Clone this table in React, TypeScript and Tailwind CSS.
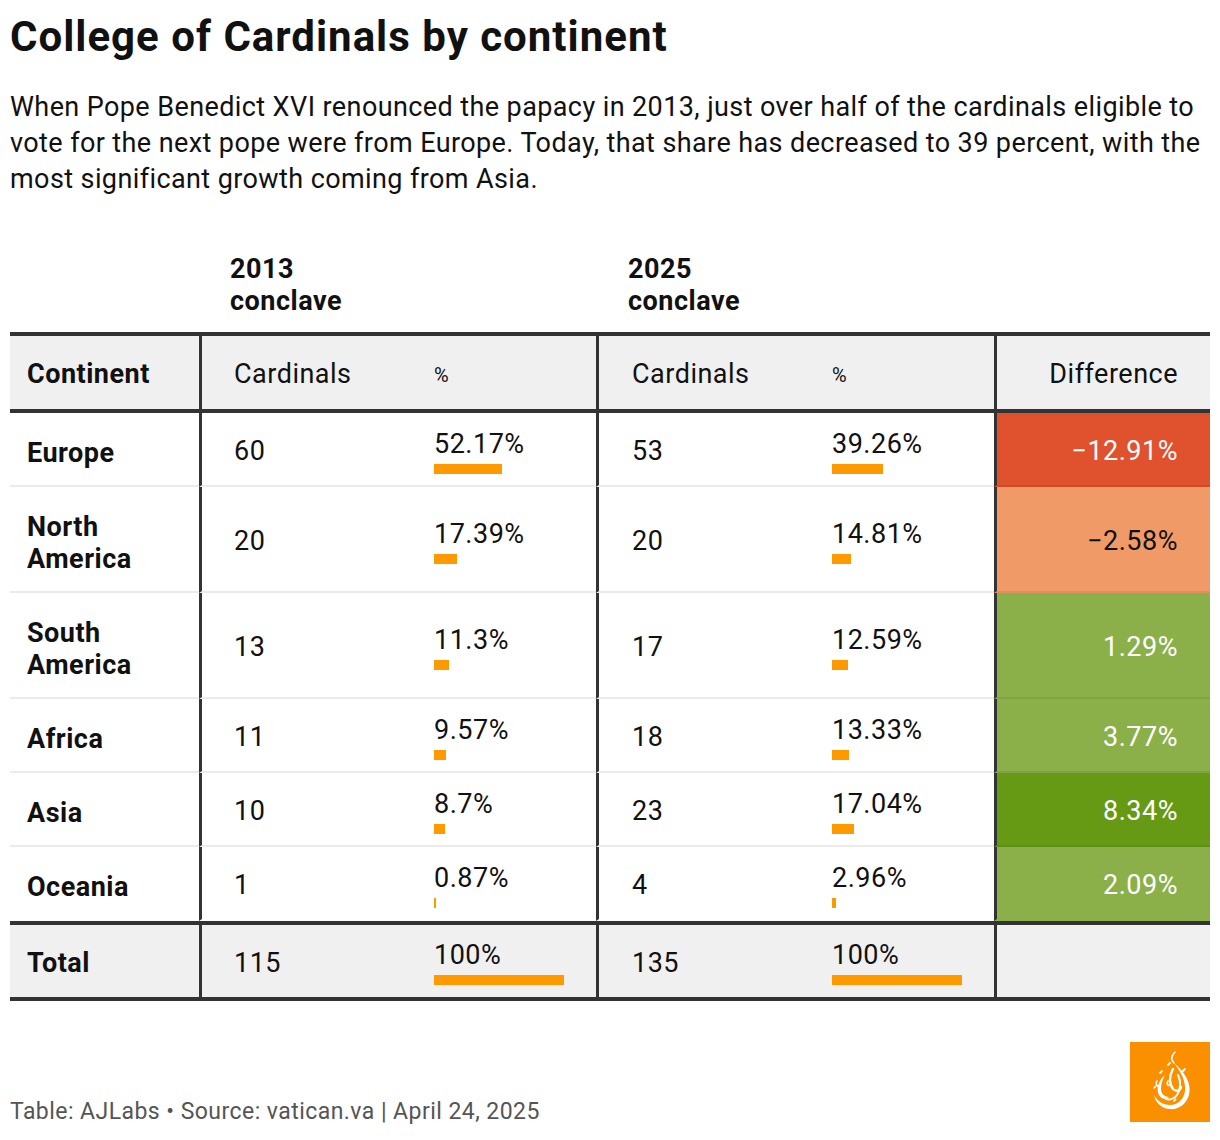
const rows = [
  { name: ["Europe"], c13: 60, p13: 52.17, c25: 53, p25: 39.26, diff: "−12.91%", bg: "bg-[#e0512e]", fg: "text-white" },
  { name: ["North", "America"], c13: 20, p13: 17.39, c25: 20, p25: 14.81, diff: "−2.58%", bg: "bg-[#f09a68]", fg: "text-[#111]" },
  { name: ["South", "America"], c13: 13, p13: 11.3, c25: 17, p25: 12.59, diff: "1.29%", bg: "bg-[#8bb04a]", fg: "text-white" },
  { name: ["Africa"], c13: 11, p13: 9.57, c25: 18, p25: 13.33, diff: "3.77%", bg: "bg-[#8bb04a]", fg: "text-white" },
  { name: ["Asia"], c13: 10, p13: 8.7, c25: 23, p25: 17.04, diff: "8.34%", bg: "bg-[#669a14]", fg: "text-white" },
  { name: ["Oceania"], c13: 1, p13: 0.87, c25: 4, p25: 2.96, diff: "2.09%", bg: "bg-[#8bb04a]", fg: "text-white" },
];

const Pct = ({ value }: { value: number }) => (
  <div className="flex flex-col">
    <span className="leading-[28px]">{value}%</span>
    <div
      className="mt-[6px] h-[10px] bg-[#ff9900]"
      style={{ width: Math.max(2, Math.round((value / 100) * 130)) }}
    />
  </div>
);

// Al Jazeera calligraphy mark, roughly traced
const Logo = () => (
  <div className="w-[80px] h-[80px] bg-[#fa9000] flex items-center justify-center">
    <svg width="44" height="62" viewBox="0 0 44 62" fill="none" stroke="white" strokeLinecap="round" strokeLinejoin="round">
      <path d="M27 1 C23 5 23 9 26 12" strokeWidth="1.4" />
      <path
        d="M26 12 C36 20 44 32 41 44 C38 54 30 59 21 58 C13 57 7 51 6 44 C9 50 15 54 22 54 C30 54 36 48 37 40 C38 30 33 21 26 12 Z"
        fill="white"
        stroke="none"
      />
      <path
        d="M17 24 C10 30 8 38 11 44 C13 48 18 49 21 46 C17 46 13 43 13 38 C13 32 15 28 17 24 Z"
        fill="white"
        stroke="none"
      />
      <path d="M25 18 C21 25 21 33 25 38 C28 41 32 40 33 36" strokeWidth="2.4" />
      <path d="M30 24 C33 30 33 38 29 44 C26 48 22 49 18 48" strokeWidth="2" />
      <path d="M9 30 C7 33 9 36 12 35" strokeWidth="1.6" />
      <path d="M20 30 C18 33 20 35 22 34" strokeWidth="1.6" />
      <path d="M20 14 l2 -2" strokeWidth="1.8" />
      <path d="M12 22 l2 -2" strokeWidth="1.8" />
      <path d="M35 20 l2 -2" strokeWidth="1.8" />
      <path d="M6 37 l1.6 -1.6" strokeWidth="1.6" />
      <path d="M36 50 l1.6 -1.6" strokeWidth="1.6" />
      <path d="M26 50 l1.6 -1.6" strokeWidth="1.6" />
    </svg>
  </div>
);

const App = () => {
  return (
    <div className="w-[1220px] h-[1140px] bg-white text-[#111] font-['Roboto',sans-serif] px-[10px] flex flex-col">
      {/* TITLE */}
      <h1 className="mt-[12px] text-[42px] font-bold leading-[50px] tracking-[1px]">
        College of Cardinals by continent
      </h1>
      <p className="mt-[27px] text-[27px] leading-[36px] tracking-[0.4px]">
        When Pope Benedict XVI renounced the papacy in 2013, just over half of the cardinals eligible to vote
        for the next pope were from Europe. Today, that share has decreased to 39 percent, with the most
        significant growth coming from Asia.
      </p>

      {/* GROUP HEADERS */}
      <div className="mt-[56px] flex text-[27px] font-bold leading-[32px] tracking-[0.5px]">
        <div className="w-[220px]" />
        <div className="w-[398px]">
          2013
          <br />
          conclave
        </div>
        <div>
          2025
          <br />
          conclave
        </div>
      </div>

      {/* TABLE */}
      <div className="mt-[15px] border-t-[4px] border-b-[4px] border-[#333] text-[27px] tracking-[0.5px]">
        {/* header */}
        <div className="flex bg-[#f0f0f0] border-b-[4px] border-[#333] h-[77px] items-stretch">
          <div className="w-[189px] pl-[17px] pt-[4px] flex items-center font-bold">Continent</div>
          <div className="w-[397px] border-l-[3px] border-[#333] pt-[4px] flex items-center">
            <div className="w-[232px] pl-[32px]">Cardinals</div>
            <div className="text-[20px]">%</div>
          </div>
          <div className="w-[398px] border-l-[3px] border-[#333] pt-[4px] flex items-center">
            <div className="w-[233px] pl-[33px]">Cardinals</div>
            <div className="text-[20px]">%</div>
          </div>
          <div className="flex-1 border-l-[3px] border-[#333] pt-[4px] flex items-center justify-end pr-[32px]">
            Difference
          </div>
        </div>

        {/* body */}
        {rows.map((r, i) => {
          const line = i === rows.length - 1 ? "border-b-transparent" : "border-b-[#ebebeb]";
          return (
            <div key={i} className="flex items-stretch">
              <div
                className={`w-[189px] pl-[17px] pt-[24px] pb-[16px] flex flex-col justify-center font-bold leading-[32px] border-b-2 ${line}`}
              >
                {r.name.map((n) => (
                  <span key={n}>{n}</span>
                ))}
              </div>
              <div
                className={`w-[397px] border-l-[3px] border-l-[#333] border-b-2 ${line} pt-[5px] flex items-center`}
              >
                <div className="w-[232px] pl-[32px]">{r.c13}</div>
                <Pct value={r.p13} />
              </div>
              <div
                className={`w-[398px] border-l-[3px] border-l-[#333] border-b-2 ${line} pt-[5px] flex items-center`}
              >
                <div className="w-[233px] pl-[33px]">{r.c25}</div>
                <Pct value={r.p25} />
              </div>
              <div
                className={`flex-1 border-l-[3px] border-l-[#333] border-b-2 ${i === rows.length - 1 ? "border-b-transparent" : "border-b-black/[0.07]"} pt-[5px] flex items-center justify-end pr-[32px] ${r.bg} ${r.fg}`}
              >
                {r.diff}
              </div>
            </div>
          );
        })}

        {/* total */}
        <div className="flex items-stretch bg-[#f0f0f0] border-t-[4px] border-[#333] h-[76px]">
          <div className="w-[189px] pl-[17px] pt-[4px] flex items-center font-bold">Total</div>
          <div className="w-[397px] border-l-[3px] border-[#333] pt-[4px] flex items-center">
            <div className="w-[232px] pl-[32px]">115</div>
            <Pct value={100} />
          </div>
          <div className="w-[398px] border-l-[3px] border-[#333] pt-[4px] flex items-center">
            <div className="w-[233px] pl-[33px]">135</div>
            <Pct value={100} />
          </div>
          <div className="flex-1 border-l-[3px] border-[#333]" />
        </div>
      </div>

      {/* FOOTER */}
      <div className="mt-[41px] flex items-end justify-between">
        <div className="text-[23px] text-[#555] leading-[28px] tracking-[0.45px] mb-[-4px]">
          Table: AJLabs • Source: vatican.va | April 24, 2025
        </div>
        <Logo />
      </div>
    </div>
  );
};

export default App;
